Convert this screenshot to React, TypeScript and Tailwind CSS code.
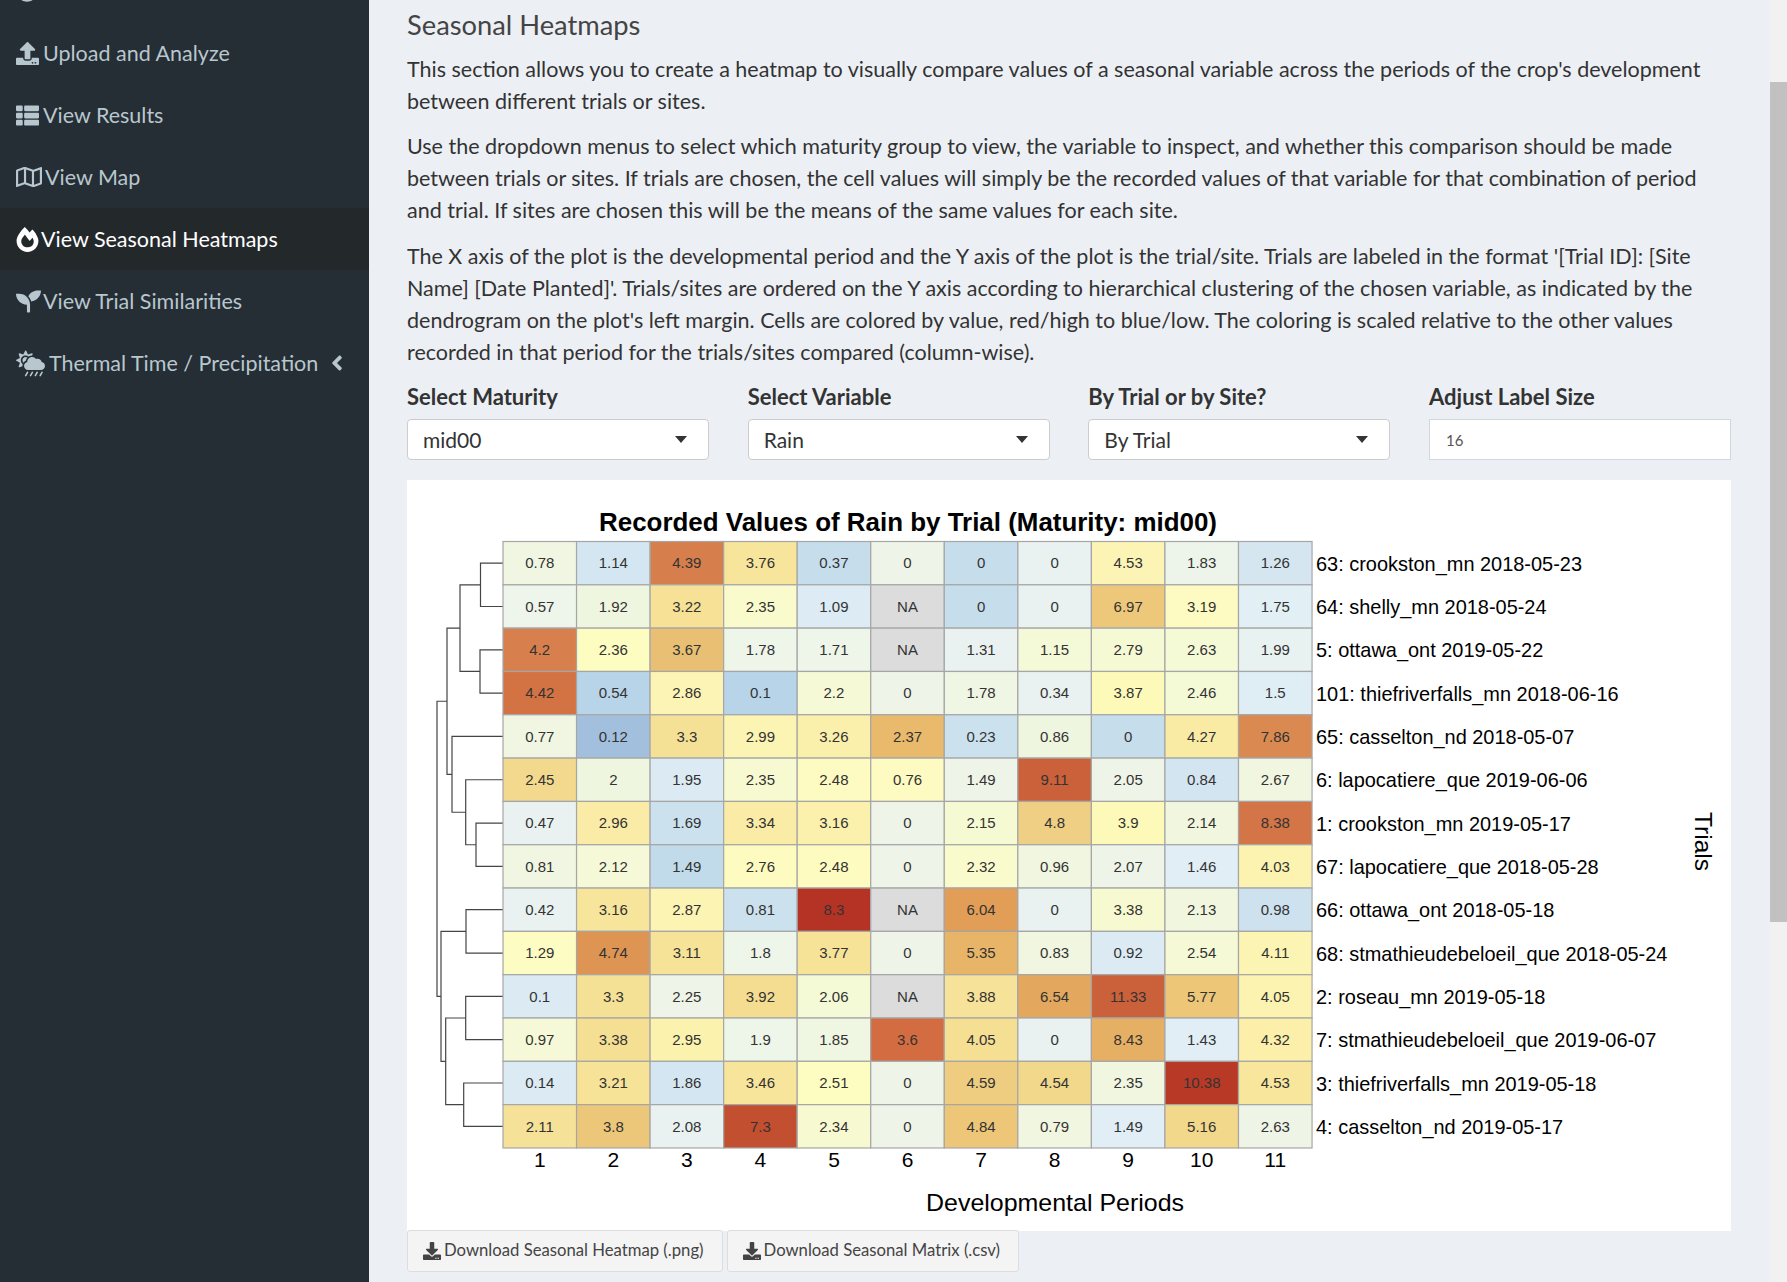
import React from "react";
import {
  FaAngleLeft,
  FaCircle,
  FaCloudSunRain,
  FaDownload,
  FaFireAlt,
  FaRegMap,
  FaSeedling,
  FaThList,
  FaUpload,
} from "react-icons/fa";

const NA = "#dcdcdc";

// value, colour for each cell, row by row
const rows: [string, string][][] = [
  [["0.78", "#f0f6e1"], ["1.14", "#d4e6f1"], ["4.39", "#d67f4c"], ["3.76", "#f6e59b"], ["0.37", "#c6ddec"], ["0", "#eef5e8"], ["0", "#c6ddec"], ["0", "#e9f2f0"], ["4.53", "#fcf4b4"], ["1.83", "#edf4e9"], ["1.26", "#d5e6f0"]],
  [["0.57", "#eef5ea"], ["1.92", "#eff6e0"], ["3.22", "#f6e196"], ["2.35", "#f9fbcd"], ["1.09", "#dcebf4"], ["NA", NA], ["0", "#c6ddec"], ["0", "#e9f2f0"], ["6.97", "#eec87a"], ["3.19", "#fdfbc1"], ["1.75", "#e2eff4"]],
  [["4.2", "#d7804d"], ["2.36", "#fdfcc1"], ["3.67", "#e9c073"], ["1.78", "#eef5e9"], ["1.71", "#eef5e9"], ["NA", NA], ["1.31", "#e9f2f0"], ["1.15", "#f4f9d8"], ["2.79", "#f5f9d4"], ["2.63", "#f4f9d6"], ["1.99", "#e8f2f1"]],
  [["4.42", "#d37344"], ["0.54", "#b8d4e8"], ["2.86", "#fbf4b5"], ["0.1", "#b8d4e8"], ["2.2", "#f5f9d5"], ["0", "#eef5e8"], ["1.78", "#eff6e3"], ["0.34", "#e9f2f0"], ["3.87", "#fdfab9"], ["2.46", "#f4f9d6"], ["1.5", "#dfedf4"]],
  [["0.77", "#f0f6e1"], ["0.12", "#a2c0dd"], ["3.3", "#f5e196"], ["2.99", "#fbf4b3"], ["3.26", "#fbf0ab"], ["2.37", "#e9b96c"], ["0.23", "#cbe1ee"], ["0.86", "#eff6df"], ["0", "#c6ddec"], ["4.27", "#faeba4"], ["7.86", "#da8a50"]],
  [["2.45", "#f3d98d"], ["2", "#eff6e0"], ["1.95", "#dcebf3"], ["2.35", "#f7fad1"], ["2.48", "#fdfbc1"], ["0.76", "#fdfbc1"], ["1.49", "#eef5e8"], ["9.11", "#cb613a"], ["2.05", "#eef5e8"], ["0.84", "#d3e5f1"], ["2.67", "#f0f6e0"]],
  [["0.47", "#e9f2f0"], ["2.96", "#faeca6"], ["1.69", "#cce1ee"], ["3.34", "#faeca6"], ["3.16", "#fbf1ad"], ["0", "#eef5e8"], ["2.15", "#f6fad3"], ["4.8", "#efcf83"], ["3.9", "#fdfab9"], ["2.14", "#f1f7df"], ["8.38", "#d37546"]],
  [["0.81", "#f0f6e1"], ["2.12", "#f5f9d7"], ["1.49", "#c1dbea"], ["2.76", "#fdfbbf"], ["2.48", "#fdfbbf"], ["0", "#eef5e8"], ["2.32", "#f9fbcd"], ["0.96", "#f0f6e0"], ["2.07", "#eef5e8"], ["1.46", "#e1eef5"], ["4.03", "#fcf3b0"]],
  [["0.42", "#e9f2f0"], ["3.16", "#f7e59b"], ["2.87", "#fcf4b3"], ["0.81", "#cce1ee"], ["8.3", "#b53324"], ["NA", NA], ["6.04", "#e29e56"], ["0", "#e9f2f0"], ["3.38", "#f7fad0"], ["2.13", "#f1f7df"], ["0.98", "#cde2ee"]],
  [["1.29", "#fdfcc3"], ["4.74", "#de9553"], ["3.11", "#f6e398"], ["1.8", "#eef5e9"], ["3.77", "#f6e398"], ["0", "#eef5e8"], ["5.35", "#e8b568"], ["0.83", "#f0f6e0"], ["0.92", "#dcebf3"], ["2.54", "#f5f9d6"], ["4.11", "#fcf4b2"]],
  [["0.1", "#dcebf3"], ["3.3", "#f5e196"], ["2.25", "#eef5e8"], ["3.92", "#f4dd90"], ["2.06", "#f4f9d6"], ["NA", NA], ["3.88", "#f6e298"], ["6.54", "#e3a75e"], ["11.33", "#cb613a"], ["5.77", "#edc678"], ["4.05", "#fcf3b0"]],
  [["0.97", "#f5f9d8"], ["3.38", "#f5df93"], ["2.95", "#fbf2ad"], ["1.9", "#eef5e9"], ["1.85", "#eff6e2"], ["3.6", "#d36d41"], ["4.05", "#f5df93"], ["0", "#e9f2f0"], ["8.43", "#e6b064"], ["1.43", "#e1eef5"], ["4.32", "#fbefa9"]],
  [["0.14", "#dcebf3"], ["3.21", "#f6e398"], ["1.86", "#d4e6f1"], ["3.46", "#f7e59b"], ["2.51", "#fdfcc1"], ["0", "#eef5e8"], ["4.59", "#eecd80"], ["4.54", "#f2d88b"], ["2.35", "#f0f6e0"], ["10.38", "#b83a26"], ["4.53", "#f7e69c"]],
  [["2.11", "#f5e197"], ["3.8", "#edc779"], ["2.08", "#e9f2f0"], ["7.3", "#c24f30"], ["2.34", "#f7fad0"], ["0", "#eef5e8"], ["4.84", "#edc678"], ["0.79", "#f0f6e0"], ["1.49", "#e1eef5"], ["5.16", "#f2d88b"], ["2.63", "#eef5e6"]],
];

const trials = [
  "63: crookston_mn 2018-05-23",
  "64: shelly_mn 2018-05-24",
  "5: ottawa_ont 2019-05-22",
  "101: thiefriverfalls_mn 2018-06-16",
  "65: casselton_nd 2018-05-07",
  "6: lapocatiere_que 2019-06-06",
  "1: crookston_mn 2019-05-17",
  "67: lapocatiere_que 2018-05-28",
  "66: ottawa_ont 2018-05-18",
  "68: stmathieudebeloeil_que 2018-05-24",
  "2: roseau_mn 2019-05-18",
  "7: stmathieudebeloeil_que 2019-06-07",
  "3: thiefriverfalls_mn 2019-05-18",
  "4: casselton_nd 2019-05-17",
];

const GRID_X = 503;
const GRID_Y = 541.5;
const CELL_W = 73.55;
const CELL_H = 43.32;

const rowMid = (i: number) => GRID_Y + CELL_H * (i + 0.5);

type Node = { x: number; kids: [Node | number, Node | number] };

// dendrogram, x is where each merge sits on the page
const tree: Node = {
  x: 437,
  kids: [
    {
      x: 447,
      kids: [
        { x: 460, kids: [{ x: 480.5, kids: [0, 1] }, { x: 480, kids: [2, 3] }] },
        {
          x: 452,
          kids: [4, { x: 465.7, kids: [5, { x: 476, kids: [6, 7] }] }],
        },
      ],
    },
    {
      x: 441,
      kids: [
        { x: 466, kids: [8, 9] },
        {
          x: 445.7,
          kids: [
            { x: 465.7, kids: [10, 11] },
            { x: 463.7, kids: [12, 13] },
          ],
        },
      ],
    },
  ],
};

function midY(n: Node): number {
  const y = (k: Node | number) => (typeof k === "number" ? rowMid(k) : midY(k));
  return (y(n.kids[0]) + y(n.kids[1])) / 2;
}

const Dendro = ({ node }: { node: Node }) => {
  const pos = (k: Node | number) => (typeof k === "number" ? { x: GRID_X, y: rowMid(k) } : { x: k.x, y: midY(k) });
  const a = pos(node.kids[0]);
  const b = pos(node.kids[1]);
  return (
    <>
      <path d={`M${a.x} ${a.y}H${node.x}V${b.y}H${b.x}`} fill="none" stroke="#444" strokeWidth="1.2" />
      {node.kids.map((k, i) => (typeof k === "number" ? null : <Dendro key={i} node={k} />))}
    </>
  );
};

const Heatmap = () => (
  <svg viewBox="407 480 1324 751" className="block h-[751px] w-[1324px]" fontFamily="'Liberation Sans', Arial, sans-serif">
    <rect x="407" y="480" width="1324" height="751" fill="#fff" />
    <text x="599" y="531" fontSize="26" fontWeight="700" textLength="618" lengthAdjust="spacingAndGlyphs" fill="#000">
      Recorded Values of Rain by Trial (Maturity: mid00)
    </text>
    <Dendro node={tree} />
    {rows.map((row, r) =>
      row.map(([val, fill], c) => (
        <g key={`${r}-${c}`}>
          <rect
            x={GRID_X + CELL_W * c}
            y={GRID_Y + CELL_H * r}
            width={CELL_W}
            height={CELL_H}
            fill={fill}
            stroke="#a6a6a6"
            strokeWidth="1.2"
          />
          <text x={GRID_X + CELL_W * (c + 0.5)} y={rowMid(r) + 5.2} fontSize="15" textAnchor="middle" fill="#333">
            {val}
          </text>
        </g>
      ))
    )}
    {trials.map((t, i) => (
      <text key={t} transform={`translate(1316 ${rowMid(i) + 7.5}) scale(0.95 1)`} fontSize="21" fill="#000">
        {t}
      </text>
    ))}
    {rows[0].map((_, c) => (
      <text key={c} x={GRID_X + CELL_W * (c + 0.5)} y="1167" fontSize="21" textAnchor="middle" fill="#000">
        {c + 1}
      </text>
    ))}
    <text x="926" y="1211" fontSize="24" textLength="258" lengthAdjust="spacingAndGlyphs" fill="#000">
      Developmental Periods
    </text>
    <text transform="translate(1695 812) rotate(90)" fontSize="24.5" fill="#000">
      Trials
    </text>
  </svg>
);

const NavItem = ({
  icon,
  label,
  active,
  gap,
  children,
}: {
  icon: React.ReactNode;
  label: string;
  active?: boolean;
  gap: string;
  children?: React.ReactNode;
}) => (
  <div className={`flex h-[62px] items-center pl-4 text-[21.5px] ${gap} ${active ? "bg-[#23282b] text-white" : "text-[#b8c7ce]"}`}>
    {icon}
    <span>{label}</span>
    {children}
  </div>
);

const Select = ({ label, value }: { label: string; value: string }) => (
  <div>
    <div className="mb-2 h-[28px] text-[22px] leading-[28px] font-bold text-[#333]">{label}</div>
    <div className="flex h-[41px] items-center justify-between rounded border border-[#ccc] bg-white pr-[21px] pl-[15px] text-[21px] text-[#333]">
      <span>{value}</span>
      <span className="h-0 w-0 border-x-[6px] border-t-[7px] border-x-transparent border-t-[#333]" />
    </div>
  </div>
);

const DownloadBtn = ({ label }: { label: string }) => (
  <div className="flex h-[42px] items-center gap-[3px] rounded-[3px] border border-[#ddd] bg-[#f4f4f4] pr-[18px] pl-[15px] text-[16.7px] text-[#444]">
    <FaDownload className="size-[18px]" />
    <span>{label}</span>
  </div>
);

export default function App() {
  return (
    <div className="flex h-[1282px] w-[1787px] overflow-hidden bg-[#ecf0f5] font-['Lato',sans-serif] text-[#333]">
      {/* sidebar */}
      <aside className="w-[369px] shrink-0 bg-[#252d35]">
        <div className="-mt-10">
          <NavItem icon={<FaCircle className="size-[22px]" />} label="" gap="gap-1" />
          <NavItem icon={<FaUpload className="size-[23px]" />} label="Upload and Analyze" gap="gap-1" />
          <NavItem icon={<FaThList className="size-[23px]" />} label="View Results" gap="gap-1" />
          <NavItem icon={<FaRegMap className="size-[26px]" />} label="View Map" gap="gap-[3px]" />
          <NavItem icon={<FaFireAlt className="size-[25px] -ml-px" />} label="View Seasonal Heatmaps" active gap="gap-[1px]" />
          <NavItem icon={<FaSeedling className="size-[25px]" />} label="View Trial Similarities" gap="gap-[2px]" />
          <NavItem icon={<FaCloudSunRain className="size-[29px]" />} label="Thermal Time / Precipitation" gap="gap-1">
            <FaAngleLeft className="ml-[3px] size-6" />
          </NavItem>
        </div>
      </aside>

      {/* content */}
      <main className="w-[1401px] shrink-0 pt-[9px] pl-[38px]">
        <h2 className="text-[27.3px] leading-[32px] text-[#444]">Seasonal Heatmaps</h2>
        <div className="mt-[12px] w-[1324px] text-[21.5px] leading-[32px]">
          <p className="whitespace-nowrap">
            This section allows you to create a heatmap to visually compare values of a seasonal variable across the periods of the crop's development
            <br />
            between different trials or sites.
          </p>
          <p className="mt-[13px] whitespace-nowrap">
            Use the dropdown menus to select which maturity group to view, the variable to inspect, and whether this comparison should be made
            <br />
            between trials or sites. If trials are chosen, the cell values will simply be the recorded values of that variable for that combination of period
            <br />
            and trial. If sites are chosen this will be the means of the same values for each site.
          </p>
          <p className="mt-[14px] whitespace-nowrap">
            The X axis of the plot is the developmental period and the Y axis of the plot is the trial/site. Trials are labeled in the format '[Trial ID]: [Site
            <br />
            Name] [Date Planted]'. Trials/sites are ordered on the Y axis according to hierarchical clustering of the chosen variable, as indicated by the
            <br />
            dendrogram on the plot's left margin. Cells are colored by value, red/high to blue/low. The coloring is scaled relative to the other values
            <br />
            recorded in that period for the trials/sites compared (column-wise).
          </p>
        </div>

        <div className="mt-[15px] grid w-[1324px] grid-cols-4 gap-x-[38.7px]">
          <Select label="Select Maturity" value="mid00" />
          <Select label="Select Variable" value="Rain" />
          <Select label="By Trial or by Site?" value="By Trial" />
          <div>
            <div className="mb-2 h-[28px] text-[22px] leading-[28px] font-bold text-[#333]">Adjust Label Size</div>
            <div className="flex h-[41px] items-center border border-[#d2d6de] bg-white pt-[2px] pl-4 text-[15px] text-[#555]">16</div>
          </div>
        </div>

        <div className="mt-5 w-[1324px]">
          <Heatmap />
        </div>

        <div className="-mt-px flex gap-1">
          <DownloadBtn label="Download Seasonal Heatmap (.png)" />
          <DownloadBtn label="Download Seasonal Matrix (.csv)" />
        </div>
      </main>

      {/* scrollbar */}
      <div className="w-[17px] shrink-0 bg-[#f1f1f1] pt-[82px]">
        <div className="h-[840px] bg-[#c1c1c1]" />
      </div>
    </div>
  );
}
